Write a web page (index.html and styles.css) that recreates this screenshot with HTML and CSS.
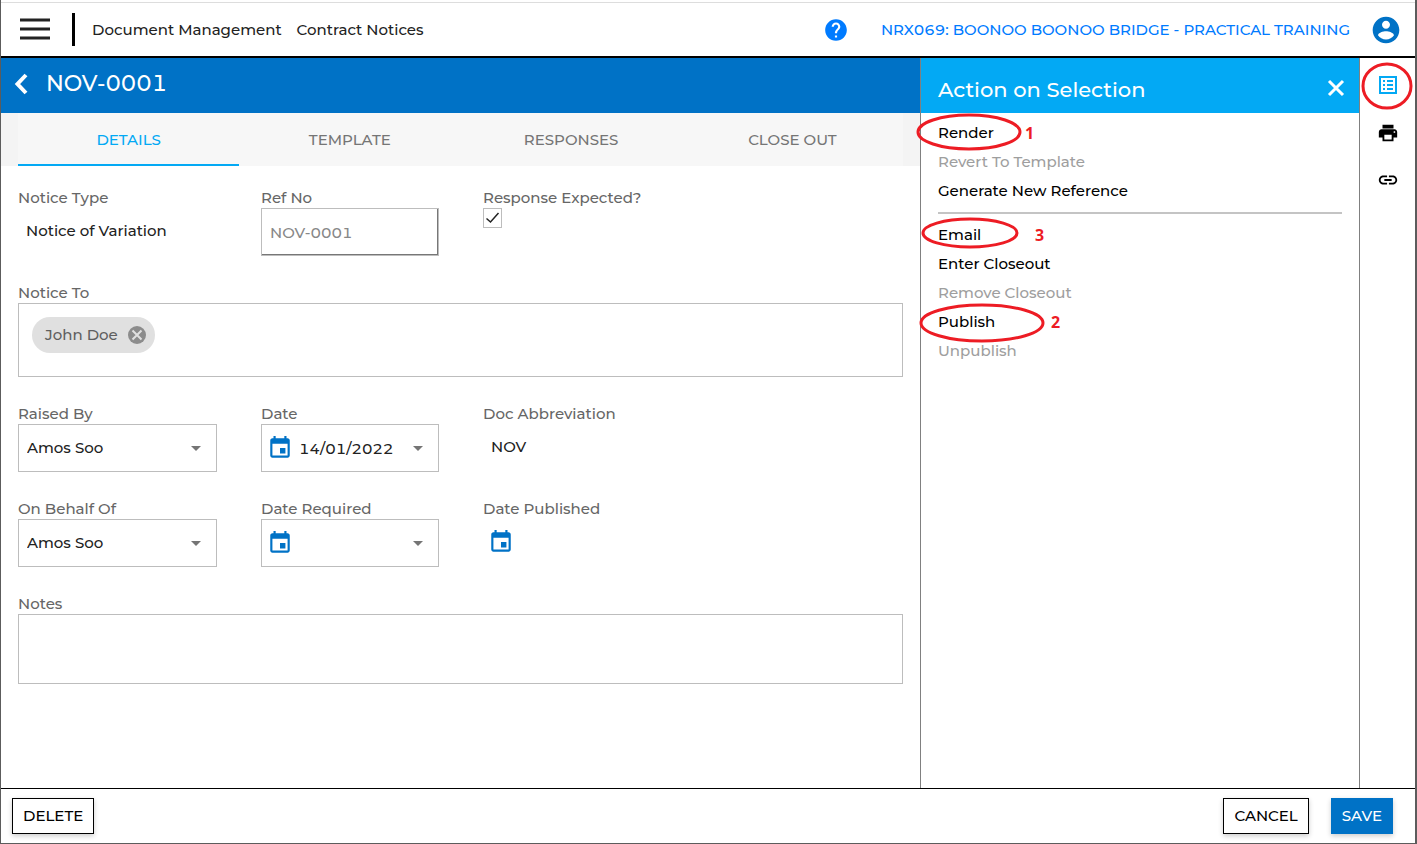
FILE: index.html
```
<!DOCTYPE html>
<html lang="en">
<head>
    <meta charset="UTF-8">
    <meta name="viewport" content="width=device-width, initial-scale=1.0">
    <title>Contract Notices</title>
    <link rel="stylesheet" href="styles.css">
</head>
<body>
    <header class="topbar">
        <button class="icon-button menu-button" aria-label="Menu">
            <svg width="32" height="24" viewBox="0 0 32 24"><path d="M1 2h30M1 11h30M1 20h30" stroke="#222" stroke-width="3"/></svg>
        </button>
        <nav class="breadcrumb">
            <a href="#">Document Management</a>
            <a href="#">Contract Notices</a>
        </nav>
        <button class="icon-button help-button" aria-label="Help">
            <svg width="26" height="26" viewBox="0 0 24 24"><path fill="#007bff" d="M12 2C6.480 2 2 6.480 2 12s4.480 10 10 10 10-4.480 10-10S17.520 2 12 2zm1 17h-2v-2h2v2zm2.070-7.750l-.9.920C13.450 12.900 13 13.500 13 15h-2v-.5c0-1.100.450-2.100 1.170-2.830l1.240-1.260c.370-.360.590-.860.590-1.410 0-1.100-.9-2-2-2s-2 .9-2 2H8c0-2.210 1.790-4 4-4s4 1.790 4 4c0 .880-.360 1.680-.930 2.250z"/></svg>
        </button>
        <a class="project-link" href="#">NRX069: BOONOO BOONOO BRIDGE - PRACTICAL TRAINING</a>
        <button class="icon-button" aria-label="Account">
            <svg width="32" height="32" viewBox="0 0 24 24"><path fill="#0072c6" d="M12 2C6.480 2 2 6.480 2 12s4.480 10 10 10 10-4.480 10-10S17.520 2 12 2zm0 3c1.660 0 3 1.340 3 3s-1.340 3-3 3-3-1.340-3-3 1.340-3 3-3zm0 14.200c-2.500 0-4.710-1.280-6-3.220.030-1.990 4-3.080 6-3.080 1.990 0 5.970 1.090 6 3.080-1.290 1.940-3.500 3.220-6 3.220z"/></svg>
        </button>
    </header>

    <div class="workspace">
        <main class="notice">
            <div class="title-bar">
                <button class="icon-button" aria-label="Back">
                    <svg width="14" height="22" viewBox="0 0 14 22"><path d="M12 2L3.500 11l8.500 9" fill="none" stroke="#fff" stroke-width="4"/></svg>
                </button>
                <h1>NOV-0001</h1>
            </div>
            <nav class="tabs">
                <button class="tab active">DETAILS</button>
                <button class="tab">TEMPLATE</button>
                <button class="tab">RESPONSES</button>
                <button class="tab">CLOSE OUT</button>
            </nav>

            <form class="notice-form">
                <div class="field">
                    <span class="label">Notice Type</span>
                    <span class="value">Notice of Variation</span>
                </div>
                <div class="field">
                    <label class="label" for="refNo">Ref No</label>
                    <input class="box ref-input" type="text" id="refNo" value="NOV-0001">
                </div>
                <div class="field">
                    <label class="label" for="responseExpected">Response Expected?</label>
                    <span class="check">
                        <input type="checkbox" id="responseExpected" checked>
                        <svg width="19" height="20" viewBox="0 0 19 20"><path d="M3.500 10.500l4 3.500 8-9" fill="none" stroke="#222" stroke-width="1.500"/></svg>
                    </span>
                </div>

                <div class="field wide">
                    <span class="label">Notice To</span>
                    <div class="box recipients">
                        <span class="chip">John Doe
                            <button class="icon-button" type="button" aria-label="Remove John Doe">
                                <svg width="18" height="18" viewBox="0 0 18 18"><circle cx="9" cy="9" r="9" fill="#8c8c8c"/><path d="M4.500 4.500l9 9M13.500 4.500l-9 9" stroke="#e0e0e0" stroke-width="2"/></svg>
                            </button>
                        </span>
                    </div>
                </div>

                <div class="field">
                    <label class="label" for="raisedBy">Raised By</label>
                    <div class="box picker">
                        <select id="raisedBy"><option>Amos Soo</option></select>
                        <span class="caret"></span>
                    </div>
                </div>
                <div class="field">
                    <label class="label" for="date">Date</label>
                    <div class="box picker">
                        <svg class="calendar" width="26" height="26" viewBox="0 0 24 24"><path fill="#0072c6" d="M17 12h-5v5h5v-5zM16 1v2H8V1H6v2H5c-1.110 0-1.990.9-1.990 2L3 19c0 1.100.890 2 2 2h14c1.100 0 2-.9 2-2V5c0-1.100-.9-2-2-2h-1V1h-2zm3 18H5V8h14v11z"/></svg>
                        <input type="text" id="date" value="14/01/2022">
                        <span class="caret"></span>
                    </div>
                </div>
                <div class="field">
                    <span class="label">Doc Abbreviation</span>
                    <span class="value">NOV</span>
                </div>

                <div class="field">
                    <label class="label" for="onBehalfOf">On Behalf Of</label>
                    <div class="box picker">
                        <select id="onBehalfOf"><option>Amos Soo</option></select>
                        <span class="caret"></span>
                    </div>
                </div>
                <div class="field">
                    <label class="label" for="dateRequired">Date Required</label>
                    <div class="box picker">
                        <svg class="calendar" width="26" height="26" viewBox="0 0 24 24"><path fill="#0072c6" d="M17 12h-5v5h5v-5zM16 1v2H8V1H6v2H5c-1.110 0-1.990.9-1.990 2L3 19c0 1.100.890 2 2 2h14c1.100 0 2-.9 2-2V5c0-1.100-.9-2-2-2h-1V1h-2zm3 18H5V8h14v11z"/></svg>
                        <input type="text" id="dateRequired">
                        <span class="caret"></span>
                    </div>
                </div>
                <div class="field">
                    <span class="label">Date Published</span>
                    <span class="value published">
                        <svg class="calendar" width="26" height="26" viewBox="0 0 24 24"><path fill="#0072c6" d="M17 12h-5v5h5v-5zM16 1v2H8V1H6v2H5c-1.110 0-1.990.9-1.990 2L3 19c0 1.100.890 2 2 2h14c1.100 0 2-.9 2-2V5c0-1.100-.9-2-2-2h-1V1h-2zm3 18H5V8h14v11z"/></svg>
                    </span>
                </div>

                <div class="field wide">
                    <label class="label" for="notes">Notes</label>
                    <textarea class="box notes" id="notes"></textarea>
                </div>
            </form>
        </main>

        <aside class="actions">
            <div class="actions-header">
                <h2>Action on Selection</h2>
                <button class="icon-button" aria-label="Close">
                    <svg width="18" height="18" viewBox="0 0 18 18"><path d="M2 2l14 14M16 2L2 16" stroke="#fff" stroke-width="3"/></svg>
                </button>
            </div>
            <div class="action-list">
                <div class="action">
                    <button>Render</button>
                    <svg class="ring ring-render" viewBox="0 0 106 38"><ellipse cx="53" cy="19" rx="51" ry="17"/></svg>
                    <span class="step step-render">1</span>
                </div>
                <div class="action"><button disabled>Revert To Template</button></div>
                <div class="action"><button>Generate New Reference</button></div>
                <hr>
                <div class="action">
                    <button>Email</button>
                    <svg class="ring ring-email" viewBox="0 0 98 32"><ellipse cx="49" cy="16" rx="47" ry="14"/></svg>
                    <span class="step step-email">3</span>
                </div>
                <div class="action"><button>Enter Closeout</button></div>
                <div class="action"><button disabled>Remove Closeout</button></div>
                <div class="action">
                    <button>Publish</button>
                    <svg class="ring ring-publish" viewBox="0 0 126 40"><ellipse cx="63" cy="20" rx="61" ry="18"/></svg>
                    <span class="step step-publish">2</span>
                </div>
                <div class="action"><button disabled>Unpublish</button></div>
            </div>
        </aside>

        <div class="rail">
            <button class="icon-button" aria-label="Actions">
                <svg width="24" height="24" viewBox="0 0 24 24"><path d="M4 4h16v16H4z" fill="none" stroke="#03a9f4" stroke-width="2"/><path d="M7 8h2M7 12h2M7 16h2M11 8h6M11 12h6M11 16h6" stroke="#03a9f4" stroke-width="2"/></svg>
                <svg class="ring ring-rail" viewBox="0 0 52 48"><ellipse cx="26" cy="24" rx="24" ry="22"/></svg>
            </button>
            <button class="icon-button" aria-label="Print">
                <svg width="22" height="22" viewBox="0 0 24 24"><path d="M19 8H5c-1.660 0-3 1.340-3 3v6h4v4h12v-4h4v-6c0-1.660-1.340-3-3-3zm-3 11H8v-5h8v5zm3-7c-.550 0-1-.450-1-1s.450-1 1-1 1 .450 1 1-.450 1-1 1zm-1-9H6v4h12V3z"/></svg>
            </button>
            <button class="icon-button" aria-label="Copy link">
                <svg width="22" height="22" viewBox="0 0 24 24"><path d="M3.900 12c0-1.710 1.390-3.100 3.100-3.100h4V7H7c-2.760 0-5 2.240-5 5s2.240 5 5 5h4v-1.900H7c-1.710 0-3.100-1.390-3.100-3.100zM8 13h8v-2H8v2zm9-6h-4v1.900h4c1.710 0 3.100 1.390 3.100 3.100s-1.390 3.100-3.100 3.100h-4V17h4c2.760 0 5-2.240 5-5s-2.240-5-5-5z"/></svg>
            </button>
        </div>
    </div>

    <footer class="footer">
        <button class="btn">DELETE</button>
        <div class="footer-right">
            <button class="btn">CANCEL</button>
            <button class="btn save">SAVE</button>
        </div>
    </footer>
</body>
</html>
```
FILE: styles.css
```
* {
    box-sizing: border-box;
}

body {
    margin: 0;
    min-height: 100vh;
    display: flex;
    flex-direction: column;
    border: 1px solid #5c5c5c;
    border-top: 0;
    border-right-width: 2px;
    background-color: #fff;
    color: #222;
    font-family: Montserrat, Inter, sans-serif;
    font-size: 15px;
    font-weight: 500;
    font-variant-numeric: tabular-nums;
    line-height: 20px;
}

button, input, select, textarea {
    font: inherit;
    font-variant-numeric: inherit;
    color: inherit;
}

svg {
    display: block;
}

h1, h2 {
    margin: 0;
    color: #fff;
    font-weight: 500;
}

.icon-button {
    display: flex;
    padding: 0;
    border: 0;
    background: none;
    cursor: pointer;
}

/* top bar */
.topbar {
    display: flex;
    align-items: center;
    height: 58px;
    padding: 3px 13px 0 18px;
    border-bottom: 2px solid #000;
    box-shadow: inset 0 2px #fff, inset 0 3px #ddd;
}

.menu-button {
    margin-right: 21px;
}

.breadcrumb {
    display: flex;
    align-items: center;
    gap: 15px;
    height: 33px;
    margin-right: auto;
    padding-left: 17px;
    border-left: 3px solid #000;
}

.breadcrumb a {
    color: #222;
    text-decoration: none;
}

.help-button {
    margin-right: 32px;
}

.project-link {
    margin-right: 20px;
    color: #007bff;
    text-decoration: none;
}

/* columns */
.workspace {
    flex: 1;
    display: flex;
}

.notice {
    flex: 1;
}

.title-bar {
    display: flex;
    align-items: center;
    gap: 18px;
    height: 55px;
    padding: 0 13px 3px;
    background-color: #0072c6;
}

.title-bar h1 {
    font-size: 22px;
    line-height: 30px;
}

.tabs {
    display: flex;
    height: 53px;
    padding: 0 17px;
    background-color: #f4f4f4;
}

.tab {
    flex: 1;
    padding: 2px 0 0;
    border: 0;
    border-bottom: 2px solid transparent;
    background-color: #f7f7f7;
    color: #757575;
    cursor: pointer;
}

.tab.active {
    border-color: #03a9f4;
    color: #03a9f4;
}

/* form */
.notice-form {
    display: grid;
    grid-template-columns: 199fr 178fr 420fr;
    gap: 27px 44px;
    padding: 22px 17px;
}

.field {
    display: flex;
    flex-direction: column;
    min-width: 0;
}

.wide {
    grid-column: 1 / -1;
}

.label {
    color: #666;
    white-space: nowrap;
}

.box {
    width: 100%;
    height: 48px;
    border: 1px solid #bdbdbd;
    background-color: #fff;
}

.value {
    padding: 0 8px;
    line-height: 46px;
}

.published {
    padding: 10px 5px;
}

.ref-input {
    padding: 0 8px;
    color: #888;
    box-shadow: inset -1px -1px #777;
}

.check {
    position: relative;
    width: 19px;
    height: 20px;
}

.check input {
    appearance: none;
    display: block;
    width: 19px;
    height: 20px;
    margin: 0;
    border: 1px solid #bdbdbd;
}

.check svg {
    position: absolute;
    top: 0;
    left: 0;
    pointer-events: none;
}

.check input:not(:checked) + svg {
    display: none;
}

.recipients {
    height: 74px;
    padding: 13px;
}

.chip {
    display: inline-flex;
    align-items: center;
    gap: 10px;
    height: 36px;
    padding: 0 9px 0 13px;
    border-radius: 18px;
    background-color: #e0e0e0;
    color: #5f5f5f;
}

.picker {
    position: relative;
    display: flex;
    align-items: center;
}

.picker select,
.picker input {
    appearance: none;
    flex: 1;
    min-width: 0;
    height: 46px;
    padding: 0 30px 0 8px;
    border: 0;
    background: none;
}

.picker .calendar {
    flex: none;
    margin-left: 5px;
}

.picker input {
    padding-left: 6px;
}

.caret {
    position: absolute;
    right: 15px;
    border: 5px solid transparent;
    border-top-color: #757575;
    border-bottom: 0;
    pointer-events: none;
}

.notes {
    height: 70px;
    padding: 8px;
    resize: none;
}

/* action panel */
.actions {
    width: 440px;
    border: 1px solid #808080;
    border-width: 0 1px;
}

.actions-header {
    display: flex;
    align-items: center;
    justify-content: space-between;
    height: 55px;
    padding: 4px 14px 0 17px;
    background-color: #03a9f4;
}

.actions-header h2 {
    padding-top: 4px;
    font-size: 21px;
    line-height: 26px;
}

.action-list {
    padding: 5px 17px;
}

.action-list hr {
    height: 2px;
    margin: 7px 0 6px;
    border: 0;
    background-color: #c4c4c4;
}

.action {
    position: relative;
    height: 29px;
}

.action button {
    height: 29px;
    padding: 0;
    border: 0;
    background: none;
    color: #000;
    cursor: pointer;
}

.action button:disabled {
    color: #9e9e9e;
    cursor: default;
}

/* numbered call-outs */
.ring {
    position: absolute;
    z-index: 1;
    fill: none;
    stroke: #ed1c24;
    stroke-width: 3;
    pointer-events: none;
}

.ring-render {
    left: -22px;
    top: -5px;
    width: 106px;
}

.ring-email {
    left: -17px;
    top: -3px;
    width: 98px;
}

.ring-publish {
    left: -19px;
    top: -4px;
    width: 126px;
}

.ring-rail {
    left: -15px;
    top: -11px;
    width: 52px;
}

.step {
    position: absolute;
    top: 5px;
    color: #ed1c24;
    font-family: "Noto Sans", sans-serif;
    font-size: 16px;
    font-weight: 700;
}

.step-render {
    left: 87px;
}

.step-email {
    left: 97px;
}

.step-publish {
    left: 113px;
}

/* icon rail */
.rail {
    display: flex;
    flex-direction: column;
    align-items: center;
    gap: 25px;
    width: 55px;
    padding-top: 15px;
}

.rail .icon-button {
    position: relative;
}

/* footer */
.footer {
    display: flex;
    justify-content: space-between;
    padding: 9px 22px 9px 11px;
    border-top: 1px solid #000;
}

.footer-right {
    display: flex;
    gap: 22px;
}

.btn {
    height: 36px;
    padding: 0 10px;
    border: 1px solid #000;
    background-color: #fff;
    color: #000;
    box-shadow: 0 2px 5px rgba(0, 0, 0, 0.2);
    cursor: pointer;
}

.save {
    border-color: #0072c6;
    background-color: #0072c6;
    color: #fff;
}
```
